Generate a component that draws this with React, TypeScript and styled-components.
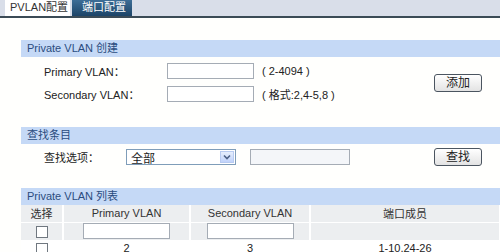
import React from "react";
import styled, { createGlobalStyle } from "styled-components";

const GlobalStyle = createGlobalStyle`
  html, body {
    margin: 0;
    padding: 0;
    background: #ffffff;
  }
  body {
    font-family: "Liberation Sans", "Noto Sans CJK SC", sans-serif;
    font-size: 12px;
    color: #222;
  }
  * {
    box-sizing: border-box;
  }
`;

const Page = styled.div`
  width: 500px;
  height: 252px;
  overflow: hidden;
  background: #fffffd;
`;

const TabBar = styled.div`
  display: flex;
  align-items: flex-end;
  gap: 2px;
  height: 18px;
  padding-left: 5px;
  background: #d9dee9;
  border-bottom: 2px solid #3b4b56;
`;

const Tab = styled.div<{ $active?: boolean }>`
  height: 17px;
  line-height: 17px;
  white-space: nowrap;
  width: ${(p) => (p.$active ? "65px" : "60px")};
  padding-left: ${(p) => (p.$active ? "5px" : "10px")};
  font-size: 11px;
  color: ${(p) => (p.$active ? "#333" : "#fff")};
  background: ${(p) =>
    p.$active ? "#ffffff" : "linear-gradient(#3f7099, #1c4467)"};
`;

const Content = styled.div`
  display: flex;
  flex-direction: column;
  padding: 22px 0 0 21px;
`;

const Section = styled.div<{ $gap?: number }>`
  margin-bottom: ${(p) => p.$gap ?? 0}px;
`;

const SectionHead = styled.div`
  height: 17px;
  line-height: 17px;
  padding-left: 6px;
  background: #c5d9f6;
  color: #2b4c7e;
  font-size: 11px;
`;

const FormRow = styled.div<{ $top?: number }>`
  display: flex;
  align-items: center;
  height: 16px;
  margin-top: ${(p) => p.$top ?? 0}px;
`;

const Label = styled.div<{ $w: number }>`
  width: ${(p) => p.$w}px;
  padding-left: 23px;
  font-size: 11px;
  white-space: nowrap;
  color: #222;
`;

const TextInput = styled.div<{ $w: number }>`
  width: ${(p) => p.$w}px;
  height: 16px;
  border: 1px solid #a5acb5;
  background: #fff;
`;

const Hint = styled.div`
  margin-left: 8px;
  font-size: 11px;
  color: #222;
`;

const CreateBody = styled.div`
  display: flex;
  align-items: center;
  padding-top: 6px;
`;

const FieldCol = styled.div`
  flex: 1;
  display: flex;
  flex-direction: column;
  gap: 7px;
`;

const Button = styled.div`
  width: 48px;
  height: 18px;
  margin-right: 18px;
  border: 1px solid #4b5560;
  border-radius: 3px;
  background: linear-gradient(#ffffff, #e3e3e3);
  text-align: center;
  line-height: 16px;
  font-size: 12px;
  color: #222;
`;

const Select = styled.div`
  display: flex;
  align-items: center;
  width: 110px;
  height: 16px;
  border: 1px solid #7f9db9;
  background: #fff;
  padding-left: 4px;
  font-size: 12px;
`;

const SelectText = styled.span`
  flex: 1;
`;

const Arrow = styled.div`
  width: 14px;
  height: 12px;
  margin-right: 1px;
  background: linear-gradient(#e6eefc, #c1d3fb);
  border: 1px solid #b8cbf1;
  display: flex;
  align-items: center;
  justify-content: center;
`;

const SearchInput = styled(TextInput)`
  margin-left: 14px;
  background: #f4f6f9;
`;

const Spacer = styled.div`
  flex: 1;
`;

const Table = styled.table`
  width: 479px;
  border-collapse: collapse;
  table-layout: fixed;
  font-size: 11px;
`;

const Th = styled.th<{ $w: number }>`
  width: ${(p) => p.$w}px;
  height: 17px;
  padding: 0;
  font-weight: normal;
  color: #333;
  background: #eceef0;
  border-right: 2px solid #fff;
  text-align: center;
`;

const Td = styled.td<{ $gray?: boolean }>`
  height: 18px;
  padding: 0;
  text-align: center;
  vertical-align: ${(p) => (p.$gray ? "middle" : "top")};
  background: ${(p) => (p.$gray ? "#eceef0" : "#fff")};
  border-right: 2px solid #fff;
  border-top: 1px solid #fff;
  color: #222;
  line-height: 15px;
`;

const Check = styled.div`
  display: inline-block;
  width: 12px;
  height: 12px;
  border: 1px solid #707880;
  background: #fff;
  vertical-align: middle;
`;

const CellInput = styled.div`
  display: inline-block;
  width: 87px;
  height: 16px;
  border: 1px solid #a5acb5;
  background: #fff;
  vertical-align: middle;
`;

export default function App() {
  return (
    <Page>
      <GlobalStyle />
      <TabBar>
        <Tab $active>PVLAN配置</Tab>
        <Tab>端口配置</Tab>
      </TabBar>
      <Content>
        <Section $gap={25}>
          <SectionHead>Private VLAN 创建</SectionHead>
          <CreateBody>
            <FieldCol>
              <FormRow>
                <Label $w={146}>Primary VLAN：</Label>
                <TextInput $w={87} />
                <Hint>( 2-4094 )</Hint>
              </FormRow>
              <FormRow>
                <Label $w={146}>Secondary VLAN：</Label>
                <TextInput $w={87} />
                <Hint>( 格式:2,4-5,8 )</Hint>
              </FormRow>
            </FieldCol>
            <Button>添加</Button>
          </CreateBody>
        </Section>
        <Section $gap={23}>
          <SectionHead>查找条目</SectionHead>
          <FormRow $top={5}>
            <Label $w={105}>查找选项：</Label>
            <Select>
              <SelectText>全部</SelectText>
              <Arrow>
                <svg width="8" height="6" viewBox="0 0 8 6">
                  <path d="M1 1.5 L4 4.5 L7 1.5" stroke="#4d6185" strokeWidth="1.6" fill="none" />
                </svg>
              </Arrow>
            </Select>
            <SearchInput $w={100} />
            <Spacer />
            <Button>查找</Button>
          </FormRow>
        </Section>
        <Section>
          <SectionHead>Private VLAN 列表</SectionHead>
          <Table>
            <thead>
              <tr>
                <Th $w={42}>选择</Th>
                <Th $w={127}>Primary VLAN</Th>
                <Th $w={120}>Secondary VLAN</Th>
                <Th $w={190}>端口成员</Th>
              </tr>
            </thead>
            <tbody>
              <tr>
                <Td $gray><Check /></Td>
                <Td $gray><CellInput /></Td>
                <Td $gray><CellInput /></Td>
                <Td $gray />
              </tr>
              <tr>
                <Td><Check /></Td>
                <Td>2</Td>
                <Td>3</Td>
                <Td>1-10,24-26</Td>
              </tr>
            </tbody>
          </Table>
        </Section>
      </Content>
    </Page>
  );
}
